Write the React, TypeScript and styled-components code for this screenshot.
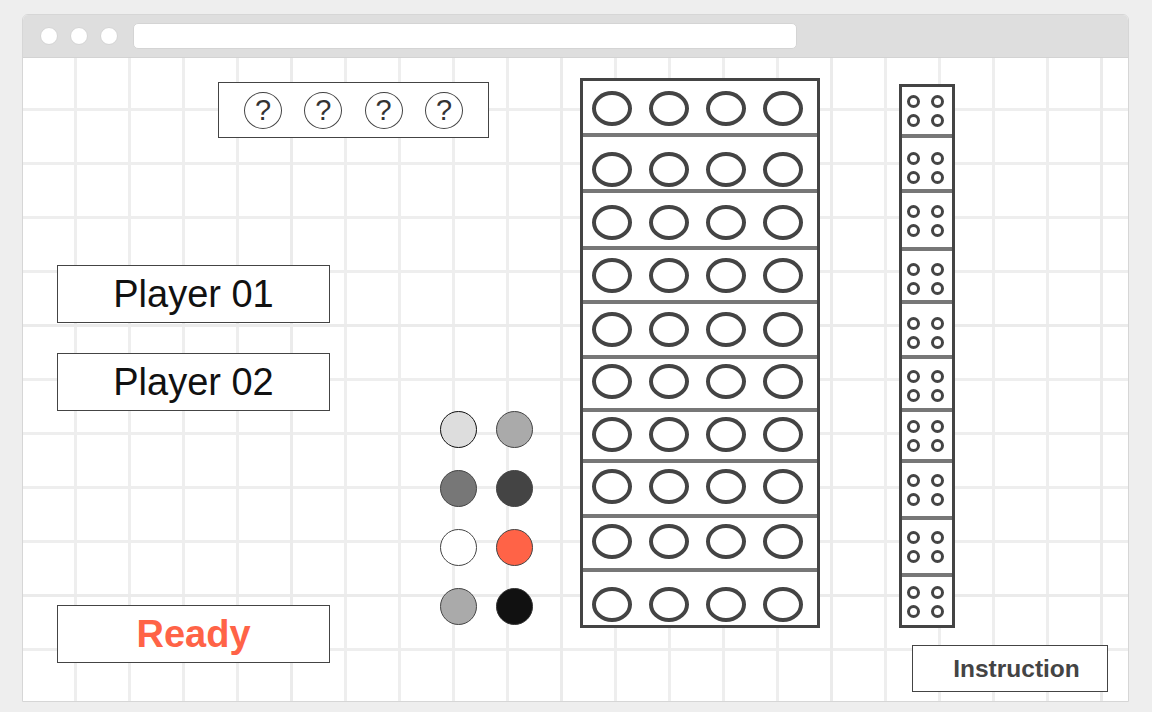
import React from "react";
import styled, { createGlobalStyle } from "styled-components";

const GlobalStyle = createGlobalStyle`
  html, body { margin: 0; padding: 0; background: #eeeeee; }
  body { font-family: "Liberation Sans", Arial, sans-serif; }
  * { box-sizing: border-box; }
`;

const Page = styled.div`
  width: 1152px;
  height: 712px;
  padding: 14px 0 0 22px;
  overflow: hidden;
`;

const Window = styled.div`
  width: 1107px;
  height: 688px;
  border: 1px solid #d6d6d6;
  border-radius: 6px 6px 0 0;
  background: #fff;
  display: flex;
  flex-direction: column;
  overflow: hidden;
`;

const TitleBar = styled.div`
  height: 43px;
  flex-shrink: 0;
  background: #dedede;
  border-bottom: 1px solid #d3d3d3;
  display: flex;
  align-items: center;
  padding-left: 17px;
  gap: 12px;
`;

const Dot = styled.span`
  width: 18px;
  height: 18px;
  border-radius: 50%;
  background: #fff;
  border: 1px solid #d4d4d4;
`;

const UrlBar = styled.div`
  margin-left: 3px;
  width: 664px;
  height: 26px;
  border-radius: 5px;
  background: #fff;
  border: 1px solid #d4d4d4;
`;

const Canvas = styled.div`
  flex: 1;
  display: flex;
  align-items: flex-start;
  padding-left: 34px;
  background-color: #fff;
  background-image:
    linear-gradient(to right, transparent 267px, #ebebeb 267px, #ebebeb 270px),
    linear-gradient(to bottom, transparent 266px, #ebebeb 266px, #ebebeb 269px, transparent 269px),
    linear-gradient(to right, transparent 51px, #eeeeee 51px, #eeeeee 54px),
    linear-gradient(to bottom, transparent 50px, #eeeeee 50px, #eeeeee 53px, transparent 53px);
  background-size: 270px 270px, 270px 270px, 54px 54px, 54px 54px;
`;

const LeftArea = styled.div`
  width: 477px;
  margin-top: 24px;
  display: flex;
  flex-direction: column;
`;

const SecretBox = styled.div`
  margin-left: 161px;
  width: 271px;
  height: 56px;
  border: 1px solid #444;
  background: #fff;
  display: flex;
  align-items: center;
  justify-content: space-between;
  padding: 0 25px;
`;

const Mystery = styled.div`
  width: 38px;
  height: 37px;
  border-radius: 50%;
  border: 1px solid #444;
  display: flex;
  align-items: center;
  justify-content: center;
  font-size: 29px;
  line-height: 1;
  color: #333;
`;

const LowerRow = styled.div`
  display: flex;
  align-items: flex-start;
`;

const PlayerColumn = styled.div`
  width: 273px;
  display: flex;
  flex-direction: column;
`;

const Panel = styled.div<{ $top: number; $ready?: boolean }>`
  margin-top: ${(p) => p.$top}px;
  height: 58px;
  border: 1px solid #444;
  background: #fff;
  display: flex;
  align-items: center;
  justify-content: center;
  font-size: 38px;
  line-height: 1;
  color: ${(p) => (p.$ready ? "#ff6347" : "#111")};
  font-weight: ${(p) => (p.$ready ? 700 : 400)};
`;

const Palette = styled.div`
  margin-left: 110px;
  margin-top: 273px;
  display: grid;
  grid-template-columns: 37px 37px;
  column-gap: 19px;
  row-gap: 22px;
`;

const ColorPeg = styled.div<{ $fill: string; $edge: string }>`
  width: 37px;
  height: 37px;
  border-radius: 50%;
  background: ${(p) => p.$fill};
  border: 1.5px solid ${(p) => p.$edge};
`;

const Board = styled.div`
  margin-left: 46px;
  margin-top: 20px;
  width: 240px;
  height: 550px;
  border: 3px solid #444;
  background: #fff;
  display: flex;
  flex-direction: column;
`;

const Separator = styled.div`
  height: 4px;
  flex-shrink: 0;
  background: #777;
`;

const GuessRow = styled.div<{ $h: number; $dy: number }>`
  height: ${(p) => p.$h}px;
  flex-shrink: 0;
  display: flex;
  align-items: center;
  justify-content: space-between;
  padding: ${(p) => Math.max(0, p.$dy * 2)}px 14px ${(p) => Math.max(0, -p.$dy * 2)}px 9px;
`;

const Hole = styled.div`
  width: 40px;
  height: 35px;
  border: 4px solid #444;
  border-radius: 50%;
`;

const RightArea = styled.div`
  margin-left: 79px;
  margin-top: 26px;
  display: flex;
  flex-direction: column;
`;

const Feedback = styled.div`
  width: 56px;
  height: 544px;
  border: 3px solid #444;
  background: #fff;
  display: flex;
  flex-direction: column;
`;

const KeyRow = styled.div<{ $h: number; $dy: number }>`
  height: ${(p) => p.$h}px;
  flex-shrink: 0;
  display: grid;
  grid-template-columns: 13px 13px;
  grid-template-rows: 13px 13px;
  column-gap: 11px;
  row-gap: 6px;
  align-content: center;
  padding: ${(p) => Math.max(0, p.$dy * 2)}px 0 ${(p) => Math.max(0, -p.$dy * 2)}px 4.5px;
`;

const KeyHole = styled.div`
  width: 13px;
  height: 13px;
  border: 3px solid #444;
  border-radius: 50%;
`;

const InstructionButton = styled.div`
  margin-top: 17px;
  margin-left: 13px;
  width: 196px;
  height: 47px;
  border: 1px solid #444;
  background: #fff;
  display: flex;
  align-items: center;
  justify-content: center;
  padding-left: 13px;
  font-size: 24.5px;
  font-weight: 700;
  color: #444;
`;

const guessRows = [
  { h: 52, dy: 1.5 },
  { h: 52, dy: 6 },
  { h: 53, dy: 2.5 },
  { h: 50, dy: 0 },
  { h: 51, dy: 0 },
  { h: 49, dy: -2 },
  { h: 47, dy: -1 },
  { h: 51, dy: -2 },
  { h: 50, dy: -2 },
  { h: 53, dy: 5.5 },
];

const keyRows = [
  { h: 47, dy: 0.5 },
  { h: 51, dy: 4 },
  { h: 54, dy: 1 },
  { h: 49, dy: 3.5 },
  { h: 51, dy: 3.5 },
  { h: 49, dy: 2 },
  { h: 47, dy: 0 },
  { h: 53, dy: 0 },
  { h: 53, dy: 0 },
  { h: 48, dy: 0.5 },
];

const palette = [
  { fill: "#dddddd", edge: "#111" },
  { fill: "#aaaaaa", edge: "#444" },
  { fill: "#777777", edge: "#444" },
  { fill: "#444444", edge: "#444" },
  { fill: "#ffffff", edge: "#444" },
  { fill: "#ff6347", edge: "#444" },
  { fill: "#aaaaaa", edge: "#444" },
  { fill: "#111111", edge: "#333" },
];

export default function App() {
  return (
    <Page>
      <GlobalStyle />
      <Window>
        <TitleBar>
          <Dot />
          <Dot />
          <Dot />
          <UrlBar />
        </TitleBar>
        <Canvas>
          <LeftArea>
            <SecretBox>
              {[0, 1, 2, 3].map((i) => (
                <Mystery key={i}>?</Mystery>
              ))}
            </SecretBox>
            <LowerRow>
              <PlayerColumn>
                <Panel $top={127}>Player 01</Panel>
                <Panel $top={30}>Player 02</Panel>
                <Panel $top={194} $ready>
                  Ready
                </Panel>
              </PlayerColumn>
              <Palette>
                {palette.map((c, i) => (
                  <ColorPeg key={i} $fill={c.fill} $edge={c.edge} />
                ))}
              </Palette>
            </LowerRow>
          </LeftArea>
          <Board>
            {guessRows.map((r, i) => (
              <React.Fragment key={i}>
                {i > 0 && <Separator />}
                <GuessRow $h={r.h} $dy={r.dy}>
                  <Hole />
                  <Hole />
                  <Hole />
                  <Hole />
                </GuessRow>
              </React.Fragment>
            ))}
          </Board>
          <RightArea>
            <Feedback>
              {keyRows.map((r, i) => (
                <React.Fragment key={i}>
                  {i > 0 && <Separator />}
                  <KeyRow $h={r.h} $dy={r.dy}>
                    <KeyHole />
                    <KeyHole />
                    <KeyHole />
                    <KeyHole />
                  </KeyRow>
                </React.Fragment>
              ))}
            </Feedback>
            <InstructionButton>Instruction</InstructionButton>
          </RightArea>
        </Canvas>
      </Window>
    </Page>
  );
}
